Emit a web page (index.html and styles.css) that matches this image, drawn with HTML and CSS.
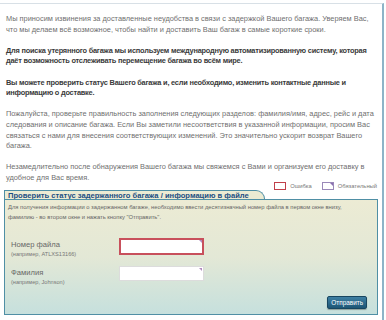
FILE: index.html
```html
<!DOCTYPE html>
<html lang="ru">
<head>
  <meta charset="UTF-8">
  <title>Задержанный багаж</title>
  <link rel="stylesheet" href="styles.css">
</head>
<body>
  <div class="page">
    <div class="intro">
      <p>Мы приносим извинения за доставленные неудобства в связи с задержкой Вашего багажа. Уверяем Вас,<br>что мы делаем всё возможное, чтобы найти и доставить Ваш багаж в самые короткие сроки.</p>
      <p class="strong">Для поиска утерянного багажа мы используем международную автоматизированную систему, которая<br>даёт возможность отслеживать перемещение багажа во всём мире.</p>
      <p class="strong">Вы можете проверить статус Вашего багажа и, если необходимо, изменить контактные данные и<br>информацию о доставке.</p>
      <p>Пожалуйста, проверьте правильность заполнения следующих разделов: фамилия/имя, адрес, рейс и дата<br>следования и описание багажа. Если Вы заметили несоответствия в указанной информации, просим Вас<br>связаться с нами для внесения соответствующих изменений. Это значительно ускорит возврат Вашего<br>багажа.</p>
      <p>Незамедлительно после обнаружения Вашего багажа мы свяжемся с Вами и организуем его доставку в<br>удобное для Вас время.</p>
    </div>

    <div class="legend">
      <span class="legend-item"><span class="mark mark-error"></span>Ошибка</span>
      <span class="legend-item"><span class="mark mark-req"></span>Обязательный</span>
    </div>

    <div class="panel">
      <div class="tab">Проверить статус задержанного багажа / информацию в файле</div>
      <div class="box">
        <p class="hint">Для получения информации о задержанном багаже, необходимо ввести десятизначный номер файла в первом окне внизу,<br>фамилию - во втором окне и нажать кнопку "Отправить".</p>
        <div class="row first">
          <label class="label">Номер файла<small>(например, ATLXS13166)</small></label>
          <span class="field error"><input type="text"></span>
        </div>
        <div class="row">
          <label class="label">Фамилия<small>(например, Johnson)</small></label>
          <span class="field"><input type="text"></span>
        </div>
        <div class="actions">
          <button>Отправить</button>
        </div>
      </div>
    </div>
  </div>
</body>
</html>
```

FILE: styles.css
```css
body {
  margin: 0;
  background: #fff;
  font-family: "Liberation Sans", Arial, sans-serif;
}
.page {
  width: 384px;
  height: 317px;
  border-top: 1px solid #d8e0e6;
  border-right: 2px solid #8db4c8;
  margin-top: 3px;
  box-sizing: border-box;
}
.intro {
  padding: 10px 6px 0 6px;
  white-space: nowrap;
}
.intro p {
  margin: 0 0 10.6px 0;
  font-size: 7.4px;
  line-height: 10.6px;
  color: #6f6f6f;
}
.intro p:last-child {
  margin-bottom: 0;
}
.intro p.strong {
  font-weight: bold;
  color: #3a3a3a;
  letter-spacing: -0.22px;
}
.legend {
  display: flex;
  justify-content: flex-end;
  gap: 10px;
  padding-right: 5px;
  margin-top: -1px;
  height: 7px;
  font-size: 5.8px;
  color: #777;
}
.legend-item {
  display: flex;
  align-items: center;
  gap: 4px;
}
.mark {
  display: inline-block;
  width: 10px;
  height: 6px;
  background: #fff;
  position: relative;
}
.mark-error {
  border: 1px solid #c0404a;
}
.mark-req {
  border: 1px solid #9a88b8;
}
.mark-req::after {
  content: "";
  position: absolute;
  right: 0;
  top: 0;
  border-top: 3px solid #8a6fb0;
  border-left: 3px solid transparent;
}
.panel {
  margin: 0 4px 0 4px;
}
.tab {
  width: 256px;
  height: 8px;
  padding: 0 0 0 3px;
  font-size: 7.6px;
  line-height: 9px;
  font-weight: bold;
  color: #1d4f82;
  background: #ecebd3;
  border: 1px solid #4f8fa5;
  border-bottom: none;
  border-radius: 0 12px 0 0;
  white-space: nowrap;
}
.box {
  height: 116px;
  box-sizing: border-box;
  border: 1px solid #4f8fa5;
  background: linear-gradient(#ecebd4, #e3e8d6 50%, #c6e0dd);
  padding: 2px 3px 0 3px;
  position: relative;
}
.hint {
  margin: 0;
  font-size: 5.8px;
  line-height: 10px;
  color: #666;
  white-space: nowrap;
}
.row {
  display: flex;
  align-items: flex-start;
  margin-top: 8px;
}
.row.first {
  margin-top: 16px;
}
.label {
  width: 108px;
  font-size: 7.6px;
  line-height: 9px;
  color: #666;
  padding-left: 3px;
  padding-top: 2px;
}
.label small {
  display: block;
  font-size: 5.6px;
  line-height: 8px;
  color: #777;
  margin-top: 1px;
}
.field {
  position: relative;
  display: inline-block;
}
.field input {
  width: 85px;
  height: 15px;
  box-sizing: border-box;
  border: 1px solid #dcdcdc;
  background: #fff;
  padding: 0;
  margin: 0;
  display: block;
  outline: none;
}
.field.error input {
  border: 2px solid #c8505c;
  height: 17px;
}
.field::after {
  content: "";
  position: absolute;
  right: 2px;
  top: 2px;
  border-top: 3px solid #b28ac0;
  border-left: 3px solid transparent;
}
.actions {
  position: absolute;
  right: 10px;
  bottom: 5px;
}
button {
  font-family: "Liberation Sans", Arial, sans-serif;
  font-size: 6.4px;
  color: #fff;
  background: linear-gradient(#3d7fa3, #1d5676);
  border: 1px solid #174660;
  border-radius: 2px;
  padding: 2px 3px;
  box-shadow: 0 1px 1px rgba(0, 0, 0, 0.3);
}
```
